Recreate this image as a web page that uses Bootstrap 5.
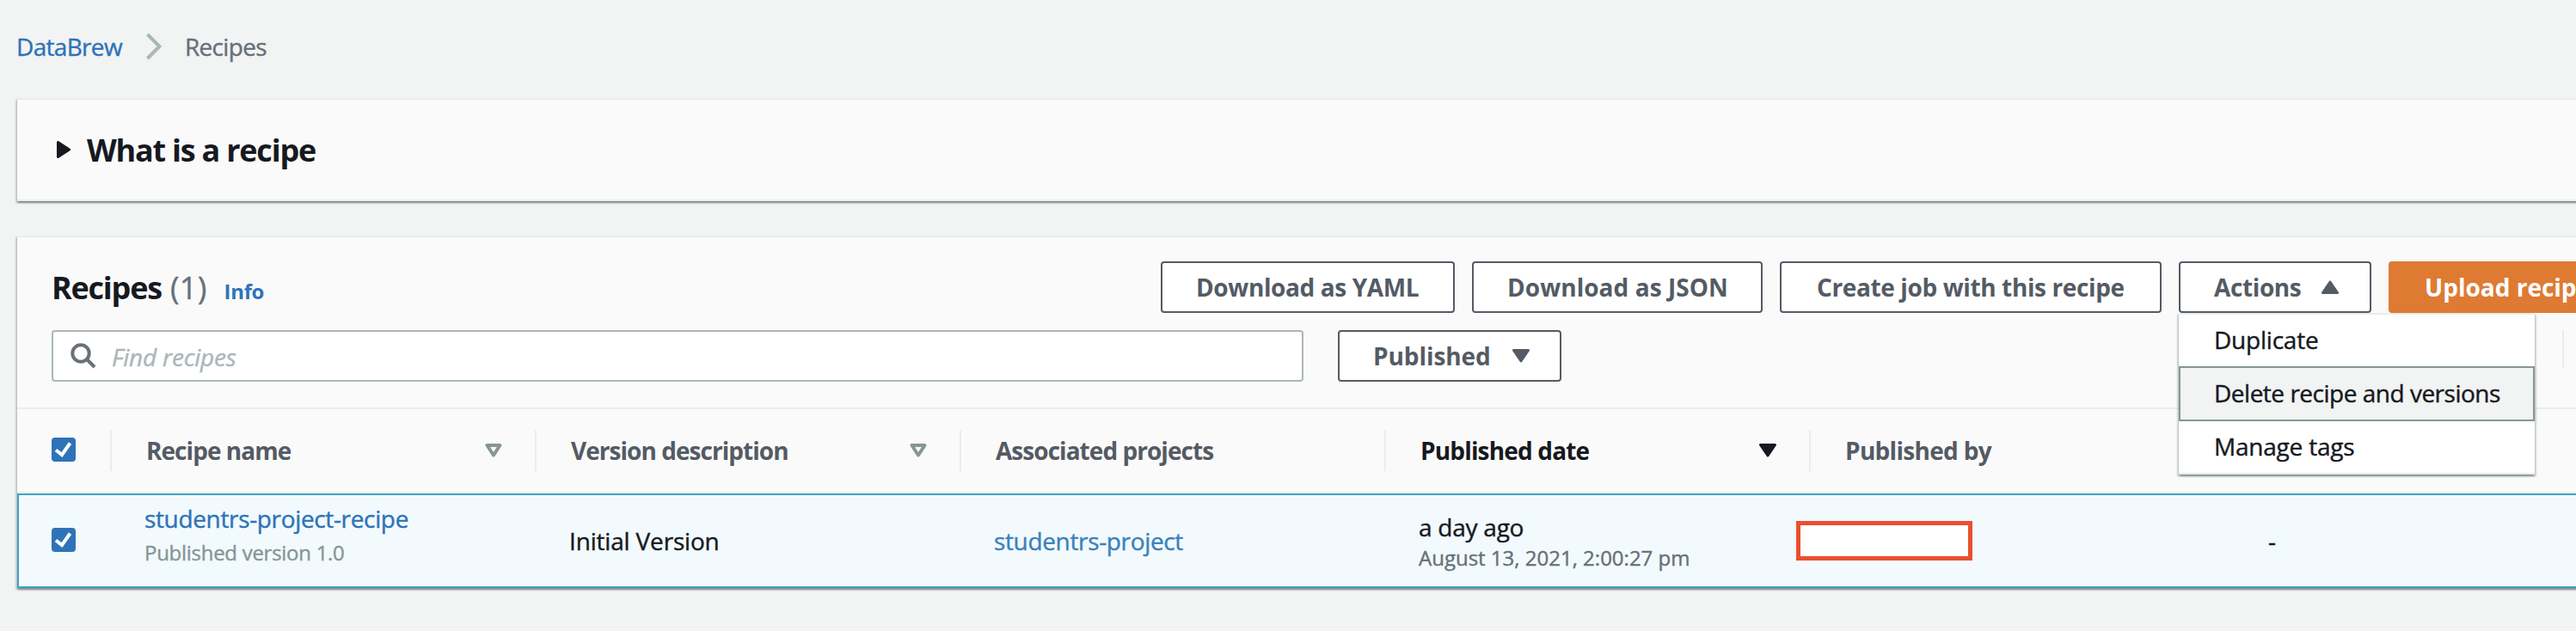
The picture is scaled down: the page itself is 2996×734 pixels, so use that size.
<!DOCTYPE html>
<html lang="en">
<head>
<meta charset="utf-8">
<meta name="viewport" content="width=device-width, initial-scale=1">
<title>DataBrew - Recipes</title>
<link href="https://cdn.jsdelivr.net/npm/bootstrap@5.3.0/dist/css/bootstrap.min.css" rel="stylesheet">
<style>
  body { background: #f2f3f3; color: #16191f; font: 400 28px/40px "Open Sans", "Noto Sans", sans-serif; letter-spacing: -.35px; -webkit-text-stroke: .4px currentColor; overflow: hidden; height: 734px; }
  a { color: #2e73b8; text-decoration: none; }
  .crumbs { height: 114px; padding: 0 0 6px 19px; letter-spacing: -.68px; }
  .crumbs .breadcrumb-item { padding: 0; color: #687078; }
  .crumbs .breadcrumb-item::before { display: none; }
  .panel { margin-left: 20px; width: 3074px; background: #fafafa; border-top: 2px solid #eaeded;
    box-shadow: 0 2px 2px 0 rgba(0,28,36,.3), 2px 2px 2px 0 rgba(0,28,36,.15), -2px 2px 2px 0 rgba(0,28,36,.15); }
  .about { height: 120px; border-bottom: 2px solid #eaeded; padding: 0 0 0 46px; margin-bottom: 40px; }
  .title { font-size: 36px; font-weight: 700; line-height: 60px; letter-spacing: -1.23px; margin: 0; }
  .title, .info, .btn, .grid th { -webkit-text-stroke: 0; }
  .count { font-weight: 400; color: #687078; letter-spacing: .3px; -webkit-text-stroke: .4px currentColor; }
  .info { font-size: 24px; font-weight: 700; letter-spacing: -.34px; }
  .tools { padding: 28px 0 30px 40px; border-bottom: 2px solid #eaeded; }
  .actions { margin-left: 1043px; gap: 20px; }
  .actions .btn, .filter { --bs-btn-padding-y: 0; --bs-btn-padding-x: 0; height: 60px; font-size: 28px; font-weight: 700; line-height: 54px; border: 2px solid #545b64; border-radius: 4px; background: #fff; color: #545b64; letter-spacing: -.38px; white-space: nowrap; text-align: left; padding: 0 0 0 39px; flex: none; }
  .actions .upload { background: #df7a33; border-color: #df7a33; color: #fff; letter-spacing: 0; width: 316px; padding-left: 40px; }
  .w-yaml { width: 342px; } .w-json { width: 338px; } .w-act { width: 224px; }
  .actions .w-job { width: 444px; padding-left: 41px; }
  .filter { width: 260px; letter-spacing: -.08px; padding-left: 39px; }
  .search { width: 1456px; height: 60px; border: 2px solid #aab7b8; border-radius: 4px; background: #fff; margin-right: 40px; padding-left: 20px; }
  .search input { border: 0; background: none; outline: 0; padding: 0; margin: 2px 0 0 18px; width: 1200px; letter-spacing: -.2px; -webkit-text-stroke: .4px currentColor; }
  .search input::placeholder { color: #aab7b8; font-style: italic; opacity: 1; }
  .vline { width: 2px; height: 44px; background: #eaeded; margin-left: 1164px; align-self: flex-start; }
  .menu.dropdown-menu { top: 60px; left: 0; width: 414px; margin: 0; padding: 0; border: 0; border-top: 2px solid #eaeded; border-bottom: 2px solid #eaeded; border-radius: 0; font-size: 28px; background: #fff;
    box-shadow: 0 2px 2px 0 rgba(0,28,36,.3), 2px 2px 2px 0 rgba(0,28,36,.15), -2px 2px 2px 0 rgba(0,28,36,.15); }
  .menu .dropdown-item { height: 60px; padding: 0 0 0 41px; line-height: 58px; color: #16191f; letter-spacing: -.22px; }
  .menu .dropdown-item.hovered { height: 64px; padding-left: 39px; border: 2px solid #879596; background: #f2f3f3; letter-spacing: -.49px; }
  .grid { border-collapse: separate; border-spacing: 0; table-layout: fixed; width: 3072px; margin: 0; }
  .grid th, .grid td { padding: 0; vertical-align: middle; }
  .grid th { height: 98px; border-bottom: 2px solid #eaeded; color: #545b64; font-weight: 700; letter-spacing: -.96px; }
  .grid th > div { height: 48px; padding: 0 38px 0 40px; border-left: 2px solid #eaeded; }
  .grid th:first-child > div { border: 0; padding: 0 0 2px 40px; }
  .grid td { height: 110px; background: #f2fafd; border: solid #44a0c5; border-width: 2px 0; padding-left: 40px; }
  .grid td:first-child { border-left-width: 2px; padding: 0 0 2px 38px; }
  .grid svg, .search svg, .btn svg { display: block; flex: none; }
  .sub { font-size: 24px; color: #879596; letter-spacing: -.28px; }
  .redacted { width: 205px; height: 46px; border: 5px solid #e9502d; background: #fff; margin-left: -55px; }
</style>
</head>
<body>
<nav class="crumbs d-flex align-items-center" aria-label="breadcrumb">
  <ol class="breadcrumb m-0 align-items-center flex-nowrap">
    <li class="breadcrumb-item"><a href="#">DataBrew</a></li>
    <li class="breadcrumb-item d-flex" style="margin:0 27px 0 28px"><svg width="18" height="32" viewBox="0 0 18 32" fill="none" stroke="#aab7b8" stroke-width="4"><path d="M1.500 2 L15.500 16 L1.500 30"/></svg></li>
    <li class="breadcrumb-item active">Recipes</li>
  </ol>
</nav>

<section class="panel about d-flex align-items-center">
  <svg width="16" height="20" viewBox="0 0 16 20" fill="#16191f" stroke="#16191f" stroke-width="3" stroke-linejoin="round"><path d="M1.500 1.500v17L14.500 10z"/></svg>
  <h2 class="title" style="margin-left:19px;padding-top:2px">What is a recipe</h2>
</section>

<section class="panel">
  <div class="tools">
    <div class="d-flex align-items-center">
      <div class="d-flex align-items-baseline flex-shrink-0" style="width:247px;padding-top:1px;height:60px">
        <h2 class="title">Recipes</h2>
        <span class="title count" style="margin-left:10px">(1)</span>
        <a class="info" href="#" style="margin-left:20px">Info</a>
      </div>
      <div class="actions d-flex">
        <button class="btn w-yaml">Download as YAML</button>
        <button class="btn w-json" style="letter-spacing:.05px">Download as JSON</button>
        <button class="btn w-job">Create job with this recipe</button>
        <div class="dropdown flex-shrink-0">
          <button class="btn w-act d-flex align-items-center">Actions<svg style="margin-left:24px" width="20" height="16" viewBox="0 0 20 16" fill="#545b64" stroke="#545b64" stroke-width="3" stroke-linejoin="round"><path d="M1.500 14.500h17L10 2z"/></svg></button>
          <div class="dropdown-menu menu show">
            <a class="dropdown-item" href="#">Duplicate</a>
            <a class="dropdown-item hovered" href="#">Delete recipe and versions</a>
            <a class="dropdown-item" href="#">Manage tags</a>
          </div>
        </div>
        <button class="btn upload">Upload recipe</button>
      </div>
    </div>
    <div class="d-flex" style="margin-top:20px">
      <div class="search d-flex align-items-center">
        <svg width="30" height="30" viewBox="0 0 30 30" fill="none" stroke="#687078" stroke-width="4"><circle cx="12" cy="12" r="9.700"/><path d="M19 19l9 9"/></svg>
        <input type="text" placeholder="Find recipes">
      </div>
      <button class="btn filter d-flex align-items-center">Published<svg style="margin-left:25px" width="20" height="16" viewBox="0 0 20 16" fill="#545b64" stroke="#545b64" stroke-width="3" stroke-linejoin="round"><path d="M1.500 1.500h17L10 14z"/></svg></button>
      <div class="vline"></div>
    </div>
  </div>

  <table class="grid">
    <colgroup><col style="width:108px"><col style="width:494px"><col style="width:494px"><col style="width:494px"><col style="width:494px"><col style="width:494px"><col style="width:494px"></colgroup>
    <thead>
      <tr>
        <th><div class="d-flex align-items-center"><svg width="28" height="28" viewBox="0 0 28 28"><rect width="28" height="28" rx="4" fill="#2e73b8"/><path d="M5 14.500l7 5.500L21.500 6.500" fill="none" stroke="#fff" stroke-width="4"/></svg></div></th>
        <th><div class="d-flex align-items-center justify-content-between">Recipe name<svg width="20" height="16" viewBox="0 0 20 16" fill="none" stroke="#879596" stroke-width="4" stroke-linejoin="round"><path d="M2.500 2h15L10 13.500z"/></svg></div></th>
        <th><div class="d-flex align-items-center justify-content-between">Version description<svg width="20" height="16" viewBox="0 0 20 16" fill="none" stroke="#879596" stroke-width="4" stroke-linejoin="round"><path d="M2.500 2h15L10 13.500z"/></svg></div></th>
        <th><div class="d-flex align-items-center">Associated projects</div></th>
        <th style="color:#16191f"><div class="d-flex align-items-center justify-content-between"><span style="letter-spacing:-.84px">Published date</span><svg width="20" height="16" viewBox="0 0 20 16" fill="#16191f" stroke="#16191f" stroke-width="3" stroke-linejoin="round"><path d="M1.500 1.500h17L10 14z"/></svg></div></th>
        <th><div class="d-flex align-items-center"><span style="letter-spacing:-.7px">Published by</span></div></th>
        <th><div></div></th>
      </tr>
    </thead>
    <tbody>
      <tr>
        <td><svg width="28" height="28" viewBox="0 0 28 28"><rect width="28" height="28" rx="4" fill="#2e73b8"/><path d="M5 14.500l7 5.500L21.500 6.500" fill="none" stroke="#fff" stroke-width="4"/></svg></td>
        <td><div style="padding-bottom:12px"><a href="#">studentrs-project-recipe</a><div class="sub">Published version 1.0</div></div></td>
        <td><span style="letter-spacing:-.18px">Initial Version</span></td>
        <td><a href="#" style="color:#3b81bb">studentrs-project</a></td>
        <td><div style="padding-top:4px;line-height:36px"><div style="letter-spacing:-.25px">a day ago</div><div class="sub" style="color:#687078;letter-spacing:0">August 13, 2021, 2:00:27 pm</div></div></td>
        <td><div class="redacted"></div></td>
        <td>-</td>
      </tr>
    </tbody>
  </table>
</section>
<script src="https://cdn.jsdelivr.net/npm/bootstrap@5.3.0/dist/js/bootstrap.bundle.min.js"></script>
</body>
</html>
